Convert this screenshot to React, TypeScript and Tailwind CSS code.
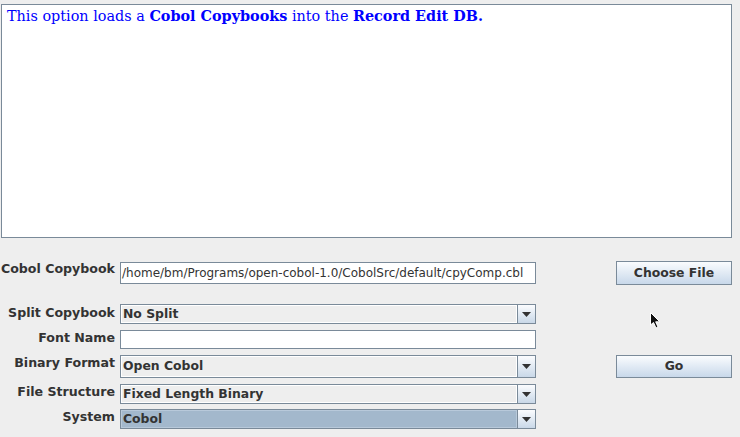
import React from "react";

const sans = { fontFamily: '"DejaVu Sans", Verdana, sans-serif' };
const serif = { fontFamily: '"DejaVu Serif", Georgia, serif' };

function Label({ text, pt = "pt-[1px]" }: { text: string; pt?: string }) {
  return (
    <div
      className={`w-[115px] shrink-0 self-start text-right text-[12.6px] leading-[14px] font-bold whitespace-nowrap text-[#333333] ${pt}`}
    >
      {text}
    </div>
  );
}

function ArrowButton() {
  return (
    <div className="flex h-full w-[18px] shrink-0 items-center justify-center border-l border-[#7a8a99] bg-gradient-to-b from-[#fbfcfe] to-[#c9d8e8]">
      <svg width="9" height="5" viewBox="0 0 9 5">
        <path d="M0 0 H9 L4.5 5 Z" fill="#333333" />
      </svg>
    </div>
  );
}

function Combo({ value, selected = false, h }: { value: string; selected?: boolean; h: string }) {
  return (
    <div className={`ml-[5px] flex w-[416px] ${h} border border-[#7a8a99] bg-[#eeeeee]`}>
      <div
        className={`flex flex-1 items-center border ${
          selected ? "border-[#b8c9da] bg-[#a3b8cc]" : "border-white bg-[#eeeeee]"
        } pl-[1px] text-[12.4px] font-bold text-[#333333]`}
      >
        {value}
      </div>
      <ArrowButton />
    </div>
  );
}

function JButton({ text }: { text: string }) {
  return (
    <div className="flex h-full w-[116px] items-center justify-center border border-[#7a8a99] bg-gradient-to-b from-[#fafcfe] to-[#c8d8ea] text-[12.4px] font-bold text-[#333333]">
      {text}
    </div>
  );
}

export default function App() {
  return (
    <div className="relative flex h-[437px] w-[740px] flex-col bg-[#eeeeee]" style={sans}>
      <div className="ml-[1px] mt-[4px] h-[234px] w-[731px] border border-[#7a8a99] bg-white px-[5px] pt-[3px]">
        <p className="text-[14.4px] leading-[16px] text-[#0000ff]" style={serif}>
          This option loads a <b>Cobol Copybooks</b> into the <b>Record Edit DB.</b>
        </p>
      </div>

      <div className="mt-[23px] flex h-[24px] items-center">
        <Label text="Cobol Copybook" pt="pt-[1px]" />
        <div className="ml-[5px] flex h-[22px] w-[416px] items-center border border-[#7a8a99] bg-white pl-[1px] text-[12px] text-[#333333]">
          /home/bm/Programs/open-cobol-1.0/CobolSrc/default/cpyComp.cbl
        </div>
        <div className="ml-[80px] h-[24px]">
          <JButton text="Choose File" />
        </div>
      </div>

      <div className="mt-[19px] flex h-[20px] items-center">
        <Label text="Split Copybook" pt="pt-[2px]" />
        <Combo value="No Split" h="h-[20px]" />
      </div>

      <div className="mt-[6px] flex h-[19px] items-center">
        <Label text="Font Name" pt="pt-[1px]" />
        <div className="ml-[5px] h-[19px] w-[416px] border border-[#7a8a99] bg-white" />
      </div>

      <div className="mt-[6px] flex h-[23px] items-center">
        <Label text="Binary Format" />
        <Combo value="Open Cobol" h="h-[23px]" />
        <div className="ml-[80px] h-[23px]">
          <JButton text="Go" />
        </div>
      </div>

      <div className="mt-[6px] flex h-[20px] items-center">
        <Label text="File Structure" />
        <Combo value="Fixed Length Binary" h="h-[20px]" />
      </div>

      <div className="mt-[5px] flex h-[20px] items-center">
        <Label text="System" />
        <Combo value="Cobol" selected h="h-[20px]" />
      </div>

      <svg
        className="absolute left-[650px] top-[312px]"
        width="11"
        height="17"
        viewBox="0 0 11 17"
      >
        <path d="M0.5 0.5 L0.5 13 L3.5 10.5 L6 16 L8 15 L5.7 9.8 L9.8 9.8 Z" fill="#111111" stroke="#ffffff" strokeWidth="1" />
      </svg>
    </div>
  );
}
